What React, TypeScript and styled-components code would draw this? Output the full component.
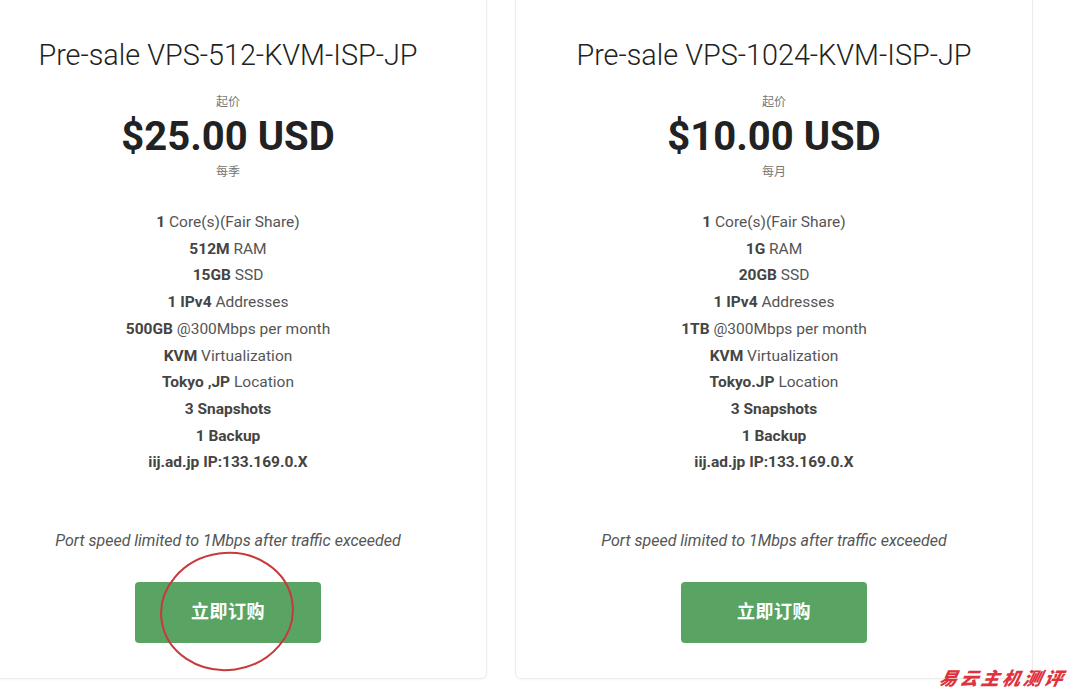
import styled, { createGlobalStyle } from 'styled-components';

const GlobalStyle = createGlobalStyle`
  html, body {
    margin: 0;
    padding: 0;
    background: #ffffff;
    overflow: hidden;
  }
  body {
    font-family: Roboto, "Noto Sans CJK SC", sans-serif;
    color: #555555;
  }
`;

const Page = styled.div`
  position: relative;
  width: 1080px;
  height: 696px;
  overflow: hidden;
`;

const CardRow = styled.div`
  display: flex;
  gap: 28px;
  margin-left: -31px;
  margin-top: -6px;
  align-items: flex-start;
`;

const Card = styled.div`
  box-sizing: border-box;
  width: 518px;
  height: 685px;
  padding: 42px 20px 0;
  border: 1px solid #ececec;
  border-radius: 6px;
  box-shadow: 0 1px 3px rgba(0, 0, 0, 0.04);
  display: flex;
  flex-direction: column;
  align-items: center;
  text-align: center;
`;

const Title = styled.h2`
  margin: 0;
  font-family: Roboto, sans-serif;
  font-weight: 300;
  font-size: 28.8px;
  line-height: 36px;
  color: #222222;
  white-space: nowrap;
`;

const Caption = styled.div<{ $top?: number }>`
  margin-top: ${p => p.$top ?? 0}px;
  font-family: "Noto Sans CJK SC", sans-serif;
  font-size: 12px;
  line-height: 20px;
  color: #777777;
`;

const Price = styled.div`
  margin-top: 2px;
  font-family: Roboto, sans-serif;
  font-weight: 700;
  font-size: 40px;
  line-height: 48px;
  color: #222222;
`;

const Features = styled.ul`
  list-style: none;
  margin: 28px 0 0;
  padding: 0;
`;

const Feature = styled.li`
  font-size: 15.5px;
  line-height: 26.7px;
  color: #555555;

  b {
    font-weight: 700;
    color: #444444;
  }
`;

const Note = styled.p`
  margin: 53px 0 0;
  font-style: italic;
  font-size: 16px;
  line-height: 24px;
  color: #555555;
`;

const ButtonWrap = styled.div`
  position: relative;
  margin-top: 29px;
`;

const OrderButton = styled.button`
  width: 186px;
  height: 61px;
  padding: 0 0 5px;
  border: none;
  border-radius: 4px;
  background: #59a463;
  color: #ffffff;
  font-family: "Noto Sans CJK SC", sans-serif;
  font-weight: 700;
  font-size: 18px;
  letter-spacing: 0.5px;
  cursor: pointer;
`;

const Circle = styled.svg`
  position: absolute;
  left: 25px;
  top: -30px;
  width: 134px;
  height: 119px;
  overflow: visible;
  pointer-events: none;
`;

const Watermark = styled.div`
  position: absolute;
  left: 940px;
  top: 666px;
  font-family: "Noto Sans CJK SC", sans-serif;
  font-weight: 900;
  font-style: italic;
  font-size: 18px;
  letter-spacing: 3px;
  line-height: 22px;
  color: #e0323c;
  transform: skewX(-12deg);
`;

type Plan = {
  title: string;
  price: string;
  period: string;
  features: [string, string][];
  circled?: boolean;
};

const plans: Plan[] = [
  {
    title: 'Pre-sale VPS-512-KVM-ISP-JP',
    price: '$25.00 USD',
    period: '每季',
    circled: true,
    features: [
      ['1', ' Core(s)(Fair Share)'],
      ['512M', ' RAM'],
      ['15GB', ' SSD'],
      ['1 IPv4', ' Addresses'],
      ['500GB', ' @300Mbps per month'],
      ['KVM', ' Virtualization'],
      ['Tokyo ,JP', ' Location'],
      ['3 Snapshots', ''],
      ['1 Backup', ''],
      ['iij.ad.jp IP:133.169.0.X', ''],
    ],
  },
  {
    title: 'Pre-sale VPS-1024-KVM-ISP-JP',
    price: '$10.00 USD',
    period: '每月',
    features: [
      ['1', ' Core(s)(Fair Share)'],
      ['1G', ' RAM'],
      ['20GB', ' SSD'],
      ['1 IPv4', ' Addresses'],
      ['1TB', ' @300Mbps per month'],
      ['KVM', ' Virtualization'],
      ['Tokyo.JP', ' Location'],
      ['3 Snapshots', ''],
      ['1 Backup', ''],
      ['iij.ad.jp IP:133.169.0.X', ''],
    ],
  },
];

const PlanCard = ({ plan }: { plan: Plan }) => (
  <Card>
    <Title>{plan.title}</Title>
    <Caption $top={18}>起价</Caption>
    <Price>{plan.price}</Price>
    <Caption>{plan.period}</Caption>
    <Features>
      {plan.features.map(([bold, rest], i) => (
        <Feature key={i}>
          <b>{bold}</b>
          {rest}
        </Feature>
      ))}
    </Features>
    <Note>Port speed limited to 1Mbps after traffic exceeded</Note>
    <ButtonWrap>
      <OrderButton>立即订购</OrderButton>
      {plan.circled && (
        <Circle viewBox="0 0 134 119">
          <ellipse
            cx="67"
            cy="59.5"
            rx="66"
            ry="58.5"
            fill="none"
            stroke="#c8393a"
            strokeWidth="2"
            transform="rotate(-8 67 59.5)"
          />
        </Circle>
      )}
    </ButtonWrap>
  </Card>
);

export default function App() {
  return (
    <Page>
      <GlobalStyle />
      <CardRow>
        {plans.map(p => (
          <PlanCard key={p.title} plan={p} />
        ))}
      </CardRow>
      <Watermark>易云主机测评</Watermark>
    </Page>
  );
}
